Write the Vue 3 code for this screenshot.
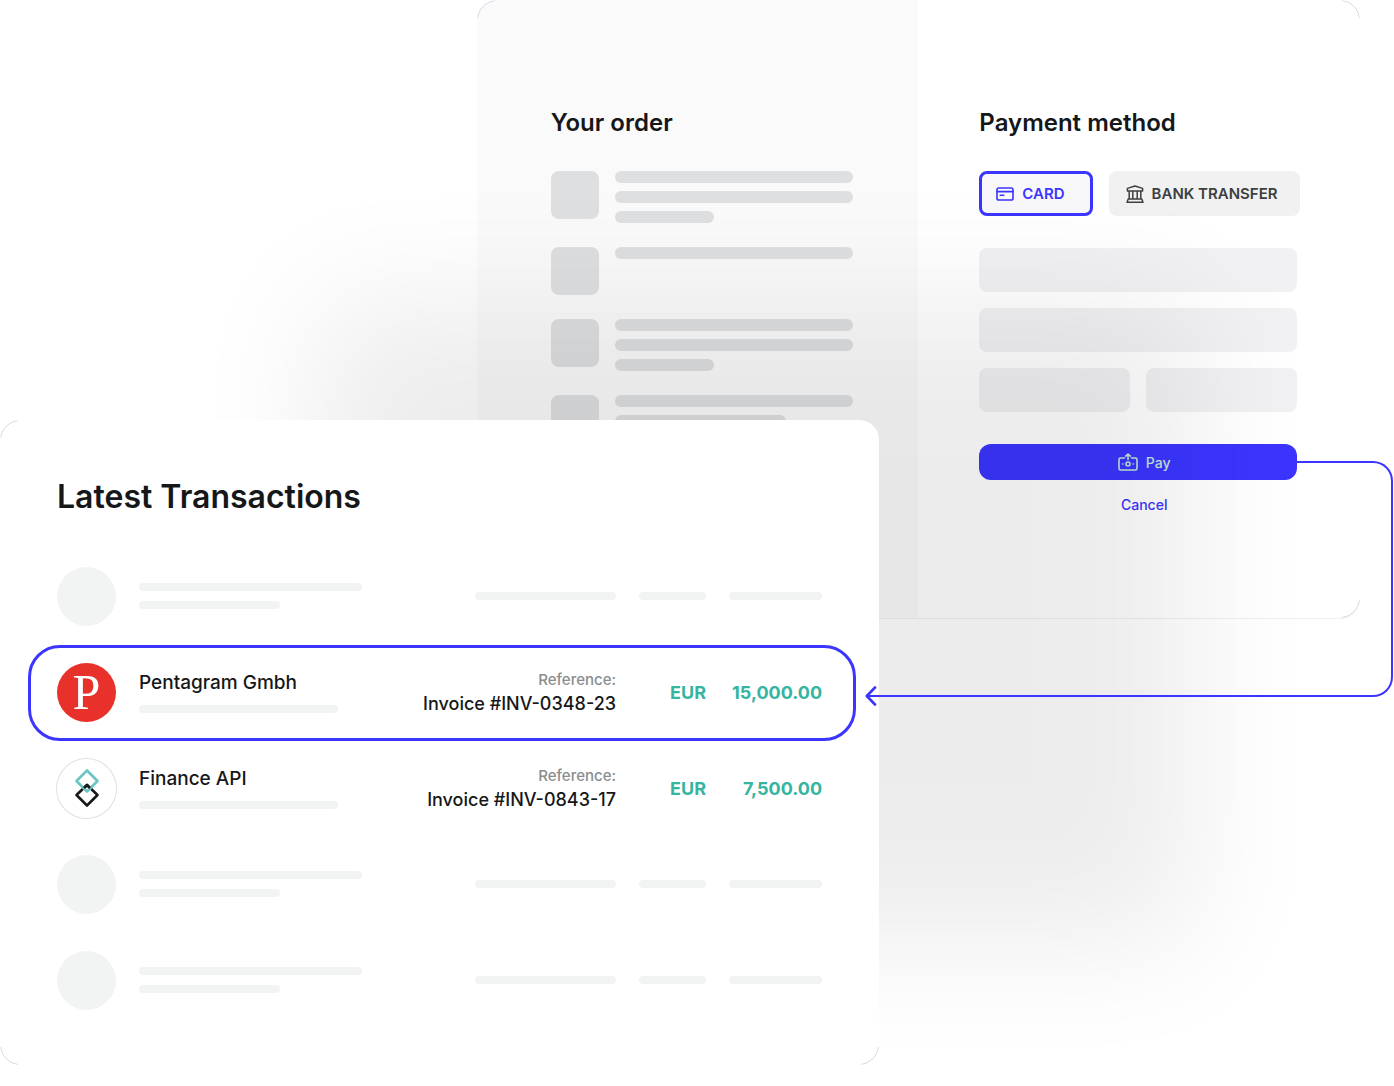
<script setup>
const orderItems = [
  { id: 1, lines: ['full', 'full', 'short'] },
  { id: 2, lines: ['full'] },
  { id: 3, lines: ['full', 'full', 'short'] },
  { id: 4, lines: ['full', 'medium'] },
]

const transactions = [
  { id: 1 },
  { id: 2, name: 'Pentagram Gmbh', logo: 'pentagram', reference: 'Invoice #INV-0348-23', currency: 'EUR', amount: '15,000.00', active: true },
  { id: 3, name: 'Finance API', logo: 'finance', reference: 'Invoice #INV-0843-17', currency: 'EUR', amount: '7,500.00' },
  { id: 4 },
  { id: 5 },
]
</script>

<template>
  <main class="stage">
    <section class="checkout framed">
      <div class="order">
        <h2>Your order</h2>
        <ul class="items">
          <li v-for="item in orderItems" :key="item.id" class="item">
            <span class="thumb"></span>
            <span class="lines">
              <span v-for="(line, i) in item.lines" :key="i" class="line" :class="line"></span>
            </span>
          </li>
        </ul>
      </div>

      <div class="payment">
        <h2>Payment method</h2>
        <div class="methods">
          <button type="button" class="method selected">
            <svg width="18" height="18" viewBox="0 0 18 18" fill="none" stroke="currentColor" stroke-width="1.6" stroke-linecap="round" stroke-linejoin="round">
              <rect x="1" y="3" width="16" height="12" rx="1.8" />
              <path d="M1 6.6h16M4.2 10.2h3.6" />
            </svg>
            CARD
          </button>
          <button type="button" class="method">
            <svg width="18" height="18" viewBox="0 0 18 18" fill="none" stroke="currentColor" stroke-width="1.5" stroke-linejoin="round">
              <path d="M9 1 16.6 3.4V6H1.4V3.4Z" />
              <path d="M3.2 6v8M6.8 6v8M11.2 6v8M14.8 6v8" />
              <path d="M2.2 14h13.6l1.2 3.2H1Z" />
            </svg>
            BANK TRANSFER
          </button>
        </div>
        <div class="fields">
          <span class="field wide"></span>
          <span class="field wide"></span>
          <span class="field"></span>
          <span class="field"></span>
        </div>
        <button type="button" class="pay">
          <svg width="20" height="18" viewBox="0 0 20 18" fill="none" stroke="currentColor" stroke-width="1.6" stroke-linecap="round" stroke-linejoin="round">
            <path d="M6.500 5H2.600Q1 5 1 6.600v8.800Q1 17 2.600 17h14.800q1.600 0 1.600-1.600V6.600Q19 5 17.400 5H13.500" />
            <path d="M10 6.500V1M7.700 3.200 10 1l2.300 2.200" />
            <circle cx="10" cy="11" r="2" />
            <path d="M4.700 11h.2M15.100 11h.2" />
          </svg>
          Pay
        </button>
        <button type="button" class="cancel">Cancel</button>
      </div>
    </section>

    <section class="transactions framed">
      <h1>Latest Transactions</h1>
      <table>
        <colgroup>
          <col class="col-logo" />
          <col />
          <col class="col-reference" />
          <col class="col-currency" />
          <col class="col-amount" />
        </colgroup>
        <tbody>
          <tr v-for="row in transactions" :key="row.id" :class="{ active: row.active }">
            <template v-if="row.name">
              <td>
                <span class="avatar" :class="row.logo">
                  <span v-if="row.logo === 'pentagram'" class="initial">P</span>
                  <svg v-else width="26" height="40" viewBox="0 0 26 40" fill="none" stroke-width="2.600" stroke-linejoin="round">
                    <path d="M13 17 23.500 27 13 37.500 2.500 27Z" stroke="#17191a" />
                    <path d="M13 2.500 23.500 13 13 23.500 2.500 13Z" stroke="#6cc5c4" />
                    <path d="M10 20 13 17l3 3" stroke="#17191a" />
                  </svg>
                </span>
              </td>
              <td>
                <span class="name">{{ row.name }}</span>
                <span class="bar under-name"></span>
              </td>
              <td class="end">
                <span class="label">Reference:</span>
                <span class="reference">{{ row.reference }}</span>
              </td>
              <td class="end money">{{ row.currency }}</td>
              <td class="end money">{{ row.amount }}</td>
            </template>
            <template v-else>
              <td><span class="avatar"></span></td>
              <td>
                <span class="bar title"></span>
                <span class="bar subtitle"></span>
              </td>
              <td><span class="bar ref"></span></td>
              <td><span class="bar cur"></span></td>
              <td><span class="bar amt"></span></td>
            </template>
          </tr>
        </tbody>
      </table>
    </section>

    <div class="connector" aria-hidden="true">
      <span class="shaft"></span>
      <span class="elbow"></span>
      <svg class="head" width="12" height="20" viewBox="0 0 12 20" fill="none" stroke="#3b35ff" stroke-width="2.600" stroke-linecap="round" stroke-linejoin="round">
        <path d="M10 1.500 1.800 10 10 18.500" />
      </svg>
    </div>
  </main>
</template>

<style>
body {
  margin: 0;
  background: #fff;
}
</style>

<style scoped>
.stage {
  position: relative;
  overflow: hidden;
  padding-bottom: 21px;
  font-family: Inter, "Liberation Sans", sans-serif;
  color: #151718;
}

h1,
h2 {
  margin: 0;
  font-weight: 600;
}

h2 {
  font-size: 24px;
  line-height: 32px;
}

button {
  font: inherit;
  border: 0;
  padding: 0;
  background: none;
  cursor: pointer;
}

.framed {
  position: relative;
  border-radius: 20px;
}

/* Hairline that shows only at the rounded corners */
.framed::before {
  content: "";
  position: absolute;
  inset: 0;
  border: 1px solid #d3d3e2;
  border-radius: 20px;
  pointer-events: none;
  mask:
    linear-gradient(#000 0 0) 0 0 / 18px 18px no-repeat,
    linear-gradient(#000 0 0) 100% 0 / 18px 18px no-repeat,
    linear-gradient(#000 0 0) 0 100% / 18px 18px no-repeat,
    linear-gradient(#000 0 0) 100% 100% / 18px 18px no-repeat;
}

.transactions.framed::before {
  mask:
    linear-gradient(#000 0 0) 0 0 / 18px 18px no-repeat,
    linear-gradient(#000 0 0) 0 100% / 18px 18px no-repeat,
    linear-gradient(#000 0 0) 100% 100% / 18px 18px no-repeat;
}

.checkout {
  display: grid;
  grid-template-columns: repeat(2, minmax(0, 1fr));
  margin: 0 34px 0 34.2%;
  background: #fff;
  border-bottom: 1px solid #f0f0f2;
}

.order {
  padding: 107px 65px 0 74px;
  background: #fafafa;
  border-radius: 20px 0 0 20px;
}

.items {
  display: flex;
  flex-direction: column;
  gap: 24px;
  margin: 32px 0 0;
  padding: 0;
  list-style: none;
}

.item {
  display: flex;
  gap: 16px;
}

.thumb {
  flex: none;
  width: 48px;
  height: 48px;
  border-radius: 8px;
  background: #dedfe0;
}

.lines {
  flex: 1;
  display: flex;
  flex-direction: column;
  gap: 8px;
}

.line {
  height: 12px;
  border-radius: 6px;
  background: #dedfe0;
}

.line.short {
  width: 99px;
}

.line.medium {
  width: 171px;
}

.payment {
  display: flex;
  flex-direction: column;
  padding: 107px 63px 102px 61px;
}

.methods {
  display: flex;
  gap: 16px;
  margin: 32px 0;
}

.method {
  flex: none;
  display: flex;
  align-items: center;
  gap: 8px;
  height: 45px;
  padding: 0 22px 0 17px;
  border-radius: 8px;
  background: #f1f1f2;
  color: #3c4040;
  font-size: 15px;
  font-weight: 600;
  white-space: nowrap;
}

.method.selected {
  border: 3px solid #3b35ff;
  padding: 0 25px 0 14px;
  background: #f8f8fa;
  color: #3b35ff;
}

.fields {
  display: grid;
  grid-template-columns: 1fr 1fr;
  gap: 16px;
}

.field {
  height: 44px;
  border-radius: 8px;
  background: #f1f1f3;
}

.field.wide {
  grid-column: span 2;
}

.pay {
  display: flex;
  align-items: center;
  justify-content: center;
  gap: 8px;
  height: 36px;
  margin-top: 32px;
  padding-left: 12px;
  border-radius: 12px;
  background: #3b35ff;
  color: #c4e6d8;
  font-size: 14px;
  font-weight: 500;
}

.cancel {
  height: 24px;
  margin-top: 12px;
  padding-left: 12px;
  color: #3b35ff;
  font-size: 14px;
  font-weight: 500;
}

.transactions {
  box-sizing: border-box;
  width: 63.06%;
  margin-top: -199px;
  padding: 57px 57px 37px;
  background: #fff;
  box-shadow: 316px -120px 130px 0 rgba(0, 0, 0, 0.076);
}

h1 {
  margin-bottom: 31px;
  font-size: 32px;
  line-height: 40px;
}

table {
  width: 100%;
  table-layout: fixed;
  border-collapse: collapse;
}

.col-logo {
  width: 82px;
}

.col-reference {
  width: 220px;
}

.col-currency {
  width: 90px;
}

.col-amount {
  width: 116px;
}

tr {
  position: relative;
  height: 96px;
}

.active td:first-child::after {
  content: "";
  position: absolute;
  inset: 1px -34px -1px -29px;
  border: 3px solid #3b35ff;
  border-radius: 32px;
  pointer-events: none;
}

td {
  padding: 0;
  vertical-align: middle;
  white-space: nowrap;
}

.avatar {
  display: flex;
  align-items: center;
  justify-content: center;
  width: 59px;
  height: 59px;
  border-radius: 50%;
  background: #f2f4f3;
}

.avatar.pentagram {
  background: #e8312b;
}

.avatar.finance {
  box-shadow: 0 0 0 1px #dfe1e1;
  background: #fff;
}

.initial {
  color: #fff;
  font-family: "Liberation Serif", serif;
  font-size: 50px;
  line-height: 59px;
}

.name,
.label,
.reference {
  display: block;
  font-weight: 500;
  line-height: 24px;
}

.name {
  font-size: 19px;
}

.label {
  color: #8a8d8d;
  font-size: 15px;
}

.reference {
  font-size: 18px;
}

.end {
  text-align: right;
}

.money {
  color: #35b5a0;
  font-size: 18px;
  font-weight: 700;
}

.bar {
  display: block;
  height: 8px;
  border-radius: 4px;
  background: #f2f3f3;
}

.title {
  width: 223px;
}

.subtitle {
  width: 141px;
  margin-top: 10px;
}

.under-name {
  width: 199px;
  margin-top: 10px;
}

.ref {
  width: 141px;
  margin-left: auto;
}

.cur {
  width: 67px;
  margin-left: auto;
}

.amt {
  width: 93px;
  margin-left: auto;
}

/* Arrow running from the Pay button to the matching transaction */
.connector {
  position: absolute;
  top: 461px;
  right: 1px;
  left: calc(63.06% - 14px);
  height: 236px;
  pointer-events: none;
}

.elbow {
  position: absolute;
  top: 0;
  right: 0;
  bottom: 0;
  box-sizing: border-box;
  width: 96px;
  border: solid #3b35ff;
  border-width: 2px 2px 2px 0;
  border-radius: 0 20px 20px 0;
}

.shaft {
  position: absolute;
  right: 96px;
  bottom: 0;
  left: 2px;
  height: 2px;
  background: #3b35ff;
}

.head {
  position: absolute;
  bottom: -9px;
  left: 0;
}
</style>
